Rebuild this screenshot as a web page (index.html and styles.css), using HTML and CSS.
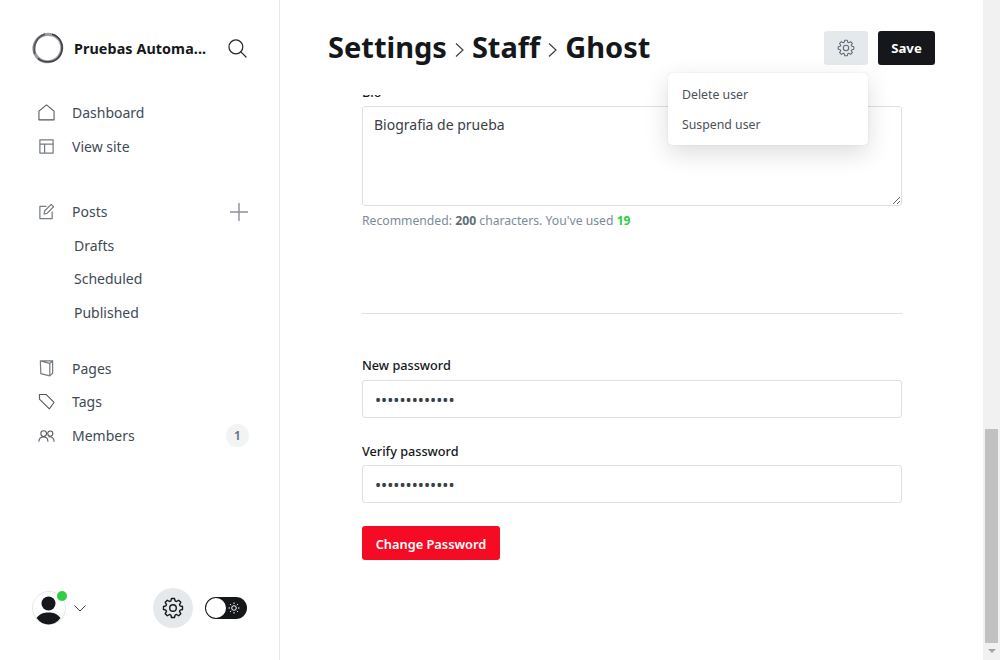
FILE: index.html
```html
<!DOCTYPE html>
<html>
<head>
    <title>Settings - Staff - Ghost</title>
    <link rel="stylesheet" href="styles.css">
</head>
<body>
    <svg class="defs" width="0" height="0">
        <symbol id="gear" viewBox="0 0 24 24">
            <path d="M19.65 9.66L22.37 10.36V13.64L19.65 14.34L19.06 15.76L20.49 18.17L18.17 20.49L15.76 19.06L14.34 19.65L13.64 22.37H10.36L9.66 19.65L8.24 19.06L5.83 20.49L3.51 18.17L4.94 15.76L4.35 14.34L1.63 13.64V10.36L4.35 9.66L4.94 8.24L3.51 5.83L5.83 3.51L8.24 4.94L9.66 4.35L10.36 1.63H13.64L14.34 4.35L15.76 4.94L18.17 3.51L20.49 5.83L19.06 8.24Z"/>
            <circle cx="12" cy="12" r="3.6"/>
        </symbol>
    </svg>

    <aside class="sidebar">
        <div class="sidebar-top">
            <div class="brand">
                <svg class="logo" viewBox="0 0 32 32">
                    <ellipse class="logo-a" cx="15.800" cy="16" rx="14" ry="13.600" transform="rotate(-25 16 16)"/>
                    <path class="logo-b" d="M2.800 22C1 14 4 5 13 2.200"/>
                    <path class="logo-c" d="M20 2.200C28.500 4.500 31.300 13 29.800 19C28 26.500 22 30.300 15.500 29.800C11 29.800 8 28.300 6 26.200"/>
                </svg>
                <span class="brand-name">Pruebas Automa...</span>
                <svg class="search" viewBox="0 0 20 20">
                    <circle cx="8.300" cy="8.300" r="7.300"/>
                    <path d="M13.500 13.500L19 19"/>
                </svg>
            </div>

            <nav class="nav nav-first">
                <a class="nav-item">
                    <svg class="nav-icon" viewBox="0 0 18 18"><path d="M1 7.500L9 1L17 7.500V16.800H1Z"/></svg>
                    Dashboard
                </a>
                <a class="nav-item">
                    <svg class="nav-icon icon-grey" viewBox="0 0 18 18"><path d="M2 2H16V16H2ZM2 6.500H16M7 6.500V16"/></svg>
                    View site
                </a>
            </nav>

            <nav class="nav nav-posts">
                <a class="nav-item">
                    <svg class="nav-icon icon-grey" viewBox="0 0 18 18"><path d="M8.500 3.500H2V16.500H15V9.500M6.500 11.500L7 8.500L14 1.500L16.500 4L9.500 11Z"/></svg>
                    Posts
                    <svg class="plus" viewBox="0 0 18 18"><path d="M9 0V18M0 9H18"/></svg>
                </a>
                <a class="nav-item nav-sub">Drafts</a>
                <a class="nav-item nav-sub">Scheduled</a>
                <a class="nav-item nav-sub">Published</a>
            </nav>

            <nav class="nav nav-pages">
                <a class="nav-item">
                    <svg class="nav-icon icon-grey" viewBox="0 0 18 18"><path d="M2.500 1H15.500V14L12.500 16.800L3 14.500ZM2.500 1L12.500 3.500V16.800M12.500 3.500L15.500 1"/></svg>
                    Pages
                </a>
                <a class="nav-item">
                    <svg class="nav-icon" viewBox="0 0 18 18"><path d="M1.500 1.500H8.500L17 10L12 16.800L1.500 6.500Z"/></svg>
                    Tags
                </a>
                <a class="nav-item">
                    <svg class="nav-icon" viewBox="0 0 18 18"><circle cx="6" cy="7" r="3"/><circle cx="13" cy="7" r="2.700"/><path d="M1 15C1 11.500 3 10.500 6 10.500C9 10.500 10.500 12 10.500 15M11.500 10.500C15 10 17 12 17 15"/></svg>
                    Members
                    <span class="badge">1</span>
                </a>
            </nav>
        </div>

        <div class="sidebar-bottom">
            <div class="user">
                <div class="avatar">
                    <svg viewBox="0 0 34 34">
                        <circle class="avatar-ring" cx="17" cy="17" r="16.500"/>
                        <circle class="avatar-fill" cx="16.500" cy="12.500" r="7"/>
                        <path class="avatar-fill" d="M4.500 27C8 22.500 12 21.500 16.500 21.500C21 21.500 25 22.500 28.500 27C25 31.500 21 33.500 16.500 33.500C12 33.500 8 31.500 4.500 27Z"/>
                    </svg>
                    <span class="status-dot"></span>
                </div>
                <svg class="chevron" viewBox="0 0 12 7"><path d="M.5 .5L6 6L11.500 .5"/></svg>
            </div>
            <div class="sidebar-actions">
                <div class="settings-round">
                    <svg class="gear-big"><use href="#gear"/></svg>
                </div>
                <div class="toggle">
                    <span class="toggle-knob"></span>
                    <svg class="sun" viewBox="0 0 12 12">
                        <circle cx="6" cy="6" r="2.300"/>
                        <path d="M6 .5V2M6 10V11.500M.5 6H2M10 6H11.500M2.100 2.100L3.200 3.200M8.800 8.800L9.900 9.900M2.100 9.900L3.200 8.800M8.800 3.200L9.900 2.100"/>
                    </svg>
                </div>
            </div>
        </div>
    </aside>

    <main class="main">
        <header class="page-header">
            <h1 class="title">
                Settings
                <svg class="crumb" viewBox="0 0 9 14"><path d="M1 .5L8 7L1 13.500"/></svg>
                Staff
                <svg class="crumb" viewBox="0 0 9 14"><path d="M1 .5L8 7L1 13.500"/></svg>
                Ghost
            </h1>
            <div class="header-actions">
                <button class="btn-gear"><svg class="gear-small"><use href="#gear"/></svg></button>
                <button class="btn-save">Save</button>
            </div>
            <div class="menu">
                <a class="menu-item">Delete user</a>
                <a class="menu-item">Suspend user</a>
            </div>
        </header>

        <form class="form">
            <label class="label label-bio">Bio</label>
            <textarea class="bio">Biografia de prueba</textarea>
            <p class="hint">Recommended: <b>200</b> characters. You've used <b class="count">19</b></p>

            <hr class="divider">

            <label class="label">New password</label>
            <input class="field" type="password" value="1234567890123">

            <label class="label label-verify">Verify password</label>
            <input class="field" type="password" value="1234567890123">

            <button type="button" class="btn-change">Change Password</button>
        </form>
    </main>

    <div class="scrollbar">
        <div class="scroll-thumb"></div>
        <div class="scroll-arrow"></div>
    </div>
</body>
</html>
```

FILE: styles.css
```css
* {
    box-sizing: border-box;
}

html, body {
    height: 660px;
    overflow: hidden;
}

body {
    margin: 0;
    display: flex;
    font-family: "Noto Sans", "Open Sans", sans-serif;
    color: #15171a;
    background: #fff;
}

.defs {
    position: absolute;
}

/* sidebar */
.sidebar {
    width: 280px;
    flex: none;
    height: 660px;
    border-right: 1px solid #e9eaec;
    padding: 33px 32px 32px 32px;
    display: flex;
    flex-direction: column;
    justify-content: space-between;
}

.brand {
    display: flex;
    align-items: center;
    height: 30px;
}

.logo {
    width: 32px;
    height: 32px;
    flex: none;
    margin-right: 10px;
}

.logo-a {
    fill: none;
    stroke: #9a9c9f;
    stroke-width: 3;
}

.logo-b {
    fill: none;
    stroke: #55575b;
    stroke-width: 1.800;
}

.logo-c {
    fill: none;
    stroke: #3c3e42;
    stroke-width: 1.500;
}

.brand-name {
    font-size: 14.300px;
    font-weight: 700;
    white-space: nowrap;
    letter-spacing: .1px;
    flex: 1;
}

.search {
    width: 19px;
    height: 19px;
    flex: none;
    fill: none;
    stroke: #26282b;
    stroke-width: 1.300;
    stroke-linecap: round;
}

.nav {
    display: flex;
    flex-direction: column;
}

.nav-first {
    margin-top: 33px;
}

.nav-posts {
    margin-top: 32px;
}

.nav-pages {
    margin-top: 22.500px;
}

.nav-item {
    display: flex;
    align-items: center;
    height: 33.500px;
    padding-left: 6px;
    font-size: 14px;
    color: #3f4a55;
}

.nav-icon {
    width: 17px;
    height: 17px;
    flex: none;
    margin-right: 17px;
    fill: none;
    stroke: #50565e;
    stroke-width: 1.100;
    stroke-linejoin: round;
    stroke-linecap: round;
}

.icon-grey {
    stroke: #767c84;
    stroke-width: 1.300;
}

.nav-sub {
    padding-left: 42px;
}

.plus {
    width: 18px;
    height: 18px;
    margin-left: auto;
    margin-right: -1px;
    fill: none;
    stroke: #8a9097;
    stroke-width: 1.400;
}

.badge {
    width: 23px;
    height: 23px;
    margin-left: auto;
    margin-right: -2px;
    border-radius: 50%;
    background: #f1f3f5;
    display: flex;
    align-items: center;
    justify-content: center;
    font-size: 12px;
    font-weight: 600;
    color: #626d79;
}

.sidebar-bottom {
    display: flex;
    align-items: center;
    justify-content: space-between;
}

.user {
    display: flex;
    align-items: center;
}

.avatar {
    width: 34px;
    height: 34px;
    position: relative;
}

.avatar svg {
    display: block;
}

.avatar-ring {
    fill: #fff;
    stroke: #e6e7e8;
    stroke-width: 1;
}

.avatar-fill {
    fill: #15171a;
}

.status-dot {
    position: absolute;
    top: 0;
    right: -1px;
    width: 10px;
    height: 10px;
    border-radius: 50%;
    background: #30cf43;
}

.chevron {
    width: 12px;
    height: 7px;
    margin-left: 8px;
    fill: none;
    stroke: #394047;
    stroke-width: 1;
}

.sidebar-actions {
    display: flex;
    align-items: center;
    gap: 12px;
}

.settings-round {
    width: 40px;
    height: 40px;
    border-radius: 50%;
    background: #e6e9ec;
    display: flex;
    align-items: center;
    justify-content: center;
}

.gear-big,
.gear-small {
    fill: none;
    stroke-linejoin: round;
}

.gear-big {
    width: 22px;
    height: 22px;
    stroke: #15171a;
    stroke-width: 1.500;
}

.toggle {
    width: 42px;
    height: 22px;
    border-radius: 11px;
    background: #15171a;
    display: flex;
    align-items: center;
    justify-content: space-between;
    padding: 0 7px 0 1px;
}

.toggle-knob {
    width: 20px;
    height: 20px;
    border-radius: 50%;
    background: #fff;
}

.sun {
    width: 12px;
    height: 12px;
    fill: none;
    stroke: #fff;
    stroke-width: 1;
}

/* main */
.main {
    flex: 1;
    min-width: 0;
    height: 660px;
    overflow: hidden;
}

.page-header {
    position: relative;
    z-index: 2;
    height: 95px;
    background: #fff;
    padding: 31px 48px 0;
    display: flex;
    justify-content: space-between;
    align-items: flex-start;
}

.title {
    margin: 0;
    font-size: 29px;
    line-height: 32px;
    font-weight: 700;
    white-space: nowrap;
    display: flex;
    align-items: center;
    gap: 8px;
}

.crumb {
    width: 9px;
    height: 14px;
    margin-top: 5px;
    fill: none;
    stroke: #394047;
    stroke-width: 1.200;
}

.header-actions {
    display: flex;
    gap: 10px;
}

.btn-gear {
    width: 44px;
    height: 34px;
    border: 0;
    border-radius: 3px;
    background: #e6e9ec;
    padding: 0;
    display: flex;
    align-items: center;
    justify-content: center;
}

.gear-small {
    width: 18px;
    height: 18px;
    stroke: #626d79;
    stroke-width: 1.500;
}

.btn-save {
    width: 57px;
    height: 34px;
    border: 0;
    border-radius: 3px;
    background: #15171a;
    color: #fff;
    font-family: inherit;
    font-size: 13.200px;
    font-weight: 700;
    padding: 0;
}

.menu {
    position: absolute;
    left: 388px;
    top: 73px;
    width: 200px;
    height: 72px;
    padding: 7px 0;
    background: #fff;
    border-radius: 4px;
    box-shadow: 0 0 1px rgba(0, 0, 0, .2), 0 8px 24px rgba(0, 0, 0, .14);
}

.menu-item {
    display: block;
    height: 30px;
    line-height: 30px;
    padding-left: 14px;
    font-size: 12.300px;
    color: #4b5159;
}

.form {
    width: 540px;
    margin: -13px 0 0 82px;
    display: flex;
    flex-direction: column;
    align-items: flex-start;
}

.label {
    display: block;
    height: 20px;
    line-height: 20px;
    font-size: 12.700px;
    font-weight: 500;
    color: #15171a;
    margin-bottom: 5px;
}

.label-bio {
    margin-bottom: 4px;
}

.label-verify {
    margin-top: 23px;
    margin-bottom: 4px;
}

.bio {
    display: block;
    width: 540px;
    height: 100px;
    border: 1px solid #dddfe1;
    border-radius: 3px;
    padding: 7px 11px;
    font-family: inherit;
    font-size: 14px;
    line-height: 21px;
    color: #394047;
    outline: none;
}

.hint {
    margin: 6px 0 0;
    height: 18px;
    line-height: 18px;
    font-size: 12.200px;
    color: #7c8b9a;
}

.hint b {
    font-weight: 700;
    color: #626d79;
}

.hint .count {
    color: #30cf43;
}

.divider {
    width: 540px;
    border: 0;
    border-top: 1px solid #dddfe1;
    margin: 83px 0 41px;
}

.field {
    display: block;
    width: 540px;
    height: 38px;
    border: 1px solid #dddfe1;
    border-radius: 3px;
    padding: 1px 12px 0;
    font-family: inherit;
    font-size: 16.300px;
    color: #394047;
    outline: none;
}

.btn-change {
    margin-top: 23px;
    width: 138px;
    height: 34px;
    border: 0;
    border-radius: 3px;
    background: #f50b23;
    color: #fff;
    font-family: inherit;
    font-size: 12.800px;
    font-weight: 600;
    padding: 2px 0 0;
}

/* scrollbar */
.scrollbar {
    width: 17px;
    flex: none;
    height: 660px;
    background: #f1f1f1;
    padding: 429px 2px 0;
}

.scroll-thumb {
    height: 214px;
    background: #c1c1c1;
}

.scroll-arrow {
    width: 0;
    height: 0;
    margin: 6px auto 0;
    border-left: 4px solid transparent;
    border-right: 4px solid transparent;
    border-top: 4px solid #a3a3a3;
}
```
